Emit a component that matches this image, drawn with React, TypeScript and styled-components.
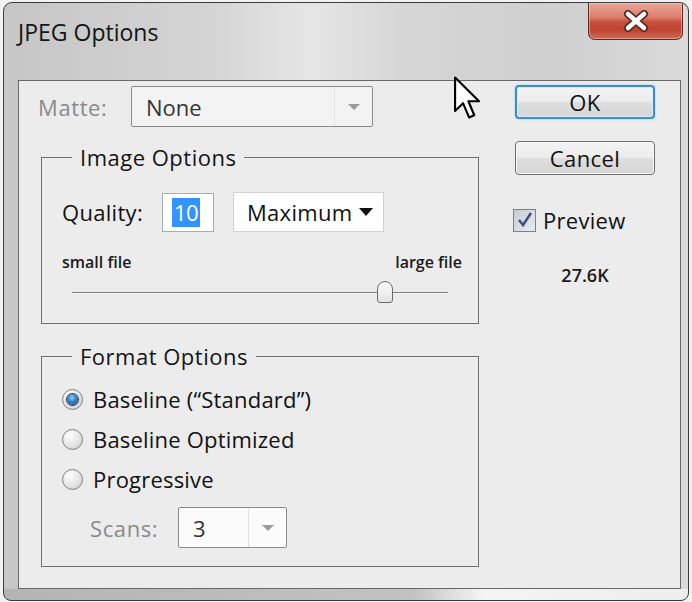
import React from 'react';
import styled, { createGlobalStyle } from 'styled-components';

const GlobalStyle = createGlobalStyle`
  html, body {
    margin: 0;
    padding: 0;
    background: #f2f2f2;
  }
  body {
    width: 692px;
    height: 602px;
    overflow: hidden;
    font-family: "Open Sans", "Liberation Sans", sans-serif;
    color: #111;
  }
`;

function App() {
  const quality = 10;
  const thumbPos = (quality / 12) * 100;

  return (
    <>
      <GlobalStyle />
      <Window>
        <TitleBar>
          <Title>JPEG Options</Title>
          <CloseButton aria-label="Close">
            <svg width="26" height="22" viewBox="0 0 26 22">
              <path d="M5 4 L21 18 M21 4 L5 18" stroke="#5a2a22" strokeWidth="8" strokeLinecap="round" />
              <path d="M5 4 L21 18 M21 4 L5 18" stroke="#ffffff" strokeWidth="4.5" strokeLinecap="round" />
            </svg>
          </CloseButton>
        </TitleBar>
        <Client>
          <LeftColumn>
            <MatteRow>
              <DimLabel $width={93}>Matte:</DimLabel>
              <Select $width={242} $disabled>
                <SelectValue>None</SelectValue>
                <SelectArrow>
                  <svg width="12" height="8" viewBox="0 0 12 8">
                    <path d="M0 1 L12 1 L6 7 Z" fill="#9a9a9a" />
                  </svg>
                </SelectArrow>
              </Select>
            </MatteRow>

            <Group $marginTop={17}>
              <Legend>Image Options</Legend>
              <QualityRow>
                <Label $width={100}>Quality:</Label>
                <NumberInput>
                  <Selected>{quality}</Selected>
                </NumberInput>
                <PlainSelect>
                  <span>Maximum</span>
                  <svg width="14" height="8" viewBox="0 0 14 8">
                    <path d="M0 0 L14 0 L7 8 Z" fill="#111" />
                  </svg>
                </PlainSelect>
              </QualityRow>
              <SizeLabels>
                <span>small file</span>
                <span>large file</span>
              </SizeLabels>
              <SliderRow>
                <Track />
                <Thumb style={{ left: `${thumbPos}%` }} />
              </SliderRow>
            </Group>

            <Group $marginTop={19} $bottom={18}>
              <Legend>Format Options</Legend>
              <RadioList>
                <RadioRow>
                  <Radio $checked />
                  <span>Baseline (“Standard”)</span>
                </RadioRow>
                <RadioRow>
                  <Radio />
                  <span>Baseline Optimized</span>
                </RadioRow>
                <RadioRow>
                  <Radio />
                  <span>Progressive</span>
                </RadioRow>
              </RadioList>
              <ScansRow>
                <DimLabel $width={88}>Scans:</DimLabel>
                <Select $width={109}>
                  <SelectValue>3</SelectValue>
                  <SelectArrow>
                    <svg width="12" height="8" viewBox="0 0 12 8">
                      <path d="M0 1 L12 1 L6 7 Z" fill="#9a9a9a" />
                    </svg>
                  </SelectArrow>
                </Select>
              </ScansRow>
            </Group>
          </LeftColumn>

          <RightColumn>
            <Button $default>OK</Button>
            <Button>Cancel</Button>
            <CheckRow>
              <Checkbox>
                <svg width="18" height="18" viewBox="0 0 18 18">
                  <path d="M3 9 L7 14 L15 2" stroke="#44507a" strokeWidth="2.6" fill="none" />
                </svg>
              </Checkbox>
              <span>Preview</span>
            </CheckRow>
            <FileSize>27.6K</FileSize>
          </RightColumn>
        </Client>

        <Cursor width="28" height="44" viewBox="0 0 13 20">
          <path
            d="M0.5 0.5 L0.5 16 L4.2 12.4 L7 19 L9.4 18 L6.7 11.5 L11.6 11.5 Z"
            fill="#fff"
            stroke="#000"
            strokeWidth="1"
            strokeLinejoin="round"
          />
        </Cursor>
      </Window>
    </>
  );
}

export default App;

const Window = styled.div`
  position: relative;
  box-sizing: border-box;
  margin: 2px 0 0 3px;
  width: 686px;
  height: 599px;
  border: 1px solid #3c3c3c;
  border-radius: 9px 9px 8px 8px;
  padding: 0 7px 11px 14px;
  display: flex;
  flex-direction: column;
  overflow: hidden;
  background:
    linear-gradient(90deg, #b4b4b4 0%, #c2c2c2 60%, #f4f4f4 70%, #ededed 100%) bottom / 100% 11px no-repeat,
    linear-gradient(90deg, #c6c6c6 0%, #d4d4d4 30%, #e6e6e6 45%, #d6d6d6 58%, #cfcfcf 80%, #dadada 100%);
`;

const TitleBar = styled.div`
  height: 77px;
  display: flex;
  justify-content: space-between;
  align-items: flex-start;
  margin-right: -2px;
`;

const Title = styled.div`
  margin-top: 14px;
  font-size: 23px;
  line-height: 30px;
  color: #141414;
`;

const CloseButton = styled.div`
  box-sizing: border-box;
  width: 95px;
  height: 37px;
  border: 1px solid #5c2a22;
  border-top: none;
  border-radius: 0 0 7px 7px;
  display: flex;
  align-items: center;
  justify-content: center;
  background: linear-gradient(
    #e9a597 0%,
    #dc7e6d 40%,
    #c8503b 52%,
    #c04530 75%,
    #d06a55 100%
  );
  box-shadow: inset 0 0 0 1px rgba(255, 220, 210, 0.45);
`;

const Client = styled.div`
  flex: 1;
  display: flex;
  border: 1px solid #686868;
  background: #ececec;
`;

const LeftColumn = styled.div`
  width: 460px;
  box-sizing: border-box;
  padding: 5px 0 0 19px;
  display: flex;
  flex-direction: column;
`;

const MatteRow = styled.div`
  display: flex;
  align-items: center;
  height: 41px;
`;

const Label = styled.div<{ $width: number }>`
  width: ${(p) => p.$width}px;
  flex-shrink: 0;
  font-size: 22px;
  letter-spacing: 0.3px;
  color: #111;
`;

const DimLabel = styled(Label)`
  color: #8a8a8a;
  letter-spacing: 0.6px;
`;

const Select = styled.div<{ $width: number; $disabled?: boolean }>`
  box-sizing: border-box;
  width: ${(p) => p.$width}px;
  height: 41px;
  display: flex;
  border: 1px solid #8a8a8a;
  border-radius: 2px;
  background: ${(p) => (p.$disabled ? '#f3f3f3' : '#fbfbfb')};
`;

const SelectValue = styled.div`
  flex: 1;
  display: flex;
  align-items: center;
  padding-left: 14px;
  font-size: 22px;
  color: ${'#333'};
  border-right: 1px solid #e2e2e2;
`;

const SelectArrow = styled.div`
  width: 37px;
  display: flex;
  align-items: center;
  justify-content: center;
`;

const Group = styled.fieldset<{ $marginTop: number; $bottom?: number }>`
  box-sizing: border-box;
  width: 438px;
  min-width: 0;
  margin: ${(p) => p.$marginTop}px 0 0 3px;
  padding: 0 16px ${(p) => p.$bottom ?? 20}px 20px;
  border: 1px solid #6e6e6e;
`;

const Legend = styled.legend`
  margin-left: 10px;
  padding: 0 8px;
  font-size: 22px;
  line-height: 26px;
  letter-spacing: 0.5px;
  color: #141414;
`;

const QualityRow = styled.div`
  margin-top: 22px;
  height: 40px;
  display: flex;
  align-items: center;
`;

const NumberInput = styled.div`
  box-sizing: border-box;
  width: 52px;
  height: 39px;
  margin-right: 19px;
  border: 1px solid #a6acb4;
  background: #fff;
  display: flex;
  align-items: center;
  padding-left: 9px;
`;

const Selected = styled.span`
  background: #3394ff;
  color: #fff;
  font-size: 22px;
  line-height: 29px;
  padding: 0 2px;
  letter-spacing: -0.5px;
`;

const PlainSelect = styled.div`
  box-sizing: border-box;
  width: 151px;
  height: 40px;
  border: 1px solid #d2d2d2;
  background: #fff;
  display: flex;
  align-items: center;
  justify-content: space-between;
  padding: 0 10px 0 13px;
  font-size: 22px;
  letter-spacing: 0.3px;
`;

const SizeLabels = styled.div`
  margin-top: 21px;
  height: 18px;
  display: flex;
  justify-content: space-between;
  align-items: center;
  font-size: 16px;
  font-weight: 600;
  color: #1a1a1a;
`;

const SliderRow = styled.div`
  position: relative;
  margin: 10px 14px 0 10px;
  height: 22px;
  display: flex;
  align-items: center;
`;

const Track = styled.div`
  flex: 1;
  height: 1px;
  background: #7c7c7c;
  box-shadow: 0 1px 0 #f8f8f8;
`;

const Thumb = styled.div`
  position: absolute;
  top: 0;
  box-sizing: border-box;
  width: 16px;
  height: 22px;
  margin-left: -8px;
  border: 1px solid #6c6c6c;
  border-radius: 8px 8px 3px 3px;
  background: linear-gradient(#fdfdfd, #e2e2e2);
`;

const RadioList = styled.div`
  margin-top: 10px;
  display: flex;
  flex-direction: column;
`;

const RadioRow = styled.div`
  height: 40px;
  display: flex;
  align-items: center;
  gap: 10px;
  font-size: 22px;
  letter-spacing: 0.2px;
`;

const Radio = styled.div<{ $checked?: boolean }>`
  position: relative;
  box-sizing: border-box;
  width: 21px;
  height: 21px;
  border-radius: 50%;
  border: 1px solid #7e7e7e;
  background: radial-gradient(circle at 35% 30%, #ffffff 0%, #e4e4e4 55%, #c8c8c8 100%);

  &::after {
    content: '';
    display: ${(p) => (p.$checked ? 'block' : 'none')};
    position: absolute;
    left: 4px;
    top: 4px;
    width: 11px;
    height: 11px;
    border-radius: 50%;
    box-shadow: 0 0 0 1px #1d3a5c;
    background: radial-gradient(circle at 45% 35%, #9fd0f5 0%, #3a86c8 40%, #14477e 100%);
  }
`;

const ScansRow = styled.div`
  margin-top: 8px;
  padding-left: 28px;
  display: flex;
  align-items: center;
`;

const RightColumn = styled.div`
  width: 140px;
  margin-left: 36px;
  padding-top: 4px;
  display: flex;
  flex-direction: column;
  align-items: stretch;
`;

const Button = styled.div<{ $default?: boolean }>`
  box-sizing: border-box;
  height: 34px;
  margin-bottom: 22px;
  border-radius: 4px;
  border: ${(p) => (p.$default ? '2px solid #3b8fc6' : '1px solid #6c6c6c')};
  box-shadow: ${(p) => (p.$default ? '0 0 2px #7cc3ee, inset 0 0 0 1px #d8effb' : 'inset 0 0 0 1px #fafafa')};
  background: linear-gradient(#f4f4f4 0%, #ececec 48%, #dedede 52%, #d6d6d6 100%);
  display: flex;
  align-items: center;
  justify-content: center;
  font-size: 22px;
  letter-spacing: 0.4px;
  color: #111;
`;

const CheckRow = styled.div`
  margin-top: 11px;
  display: flex;
  align-items: center;
  gap: 7px;
  height: 24px;
  margin-left: -2px;
  font-size: 22px;
  letter-spacing: 0.3px;
`;

const Checkbox = styled.div`
  box-sizing: border-box;
  width: 23px;
  height: 23px;
  border: 1px solid #808080;
  background: linear-gradient(135deg, #c5ccd6, #e8ecf2);
  display: flex;
  align-items: center;
  justify-content: center;
`;

const FileSize = styled.div`
  margin-top: 31px;
  text-align: center;
  font-size: 18px;
  font-weight: 600;
  line-height: 24px;
  color: #1a1a1a;
`;

const Cursor = styled.svg`
  position: absolute;
  left: 450px;
  top: 73px;
`;
